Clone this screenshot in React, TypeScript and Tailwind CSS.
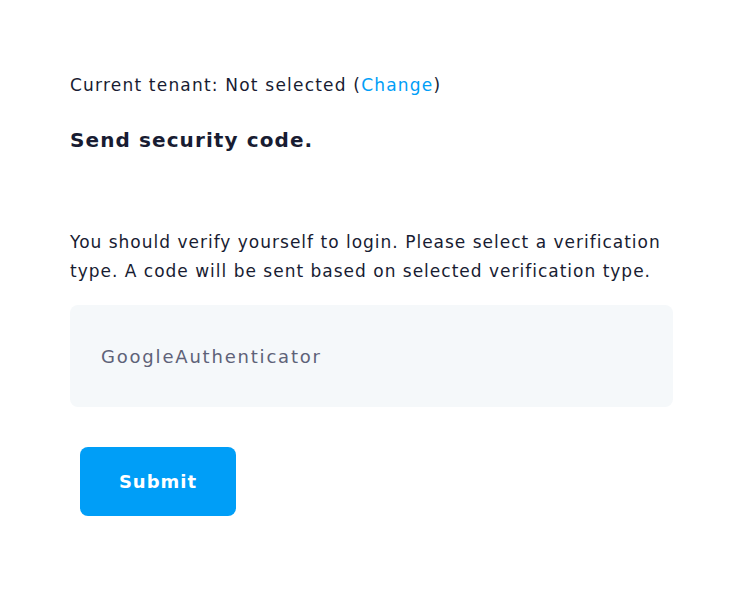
import React from "react";

export default function App() {
  return (
    <div className="min-h-[601px] w-[746px] bg-white" style={{ fontFamily: '"DejaVu Sans", "Noto Sans", sans-serif' }}>
      <div className="pl-[70px] pr-[73px] pt-[73px]">
        <p className="text-[17px] leading-[24px] tracking-[1.2px] text-[#181c32]">
          Current tenant: Not selected (<a className="text-[#009ef7]">Change</a>)
        </p>
        <h1 className="mt-[28px] text-[20px] font-bold leading-[30px] tracking-[1.1px] text-[#181c32]">Send security code.</h1>
        <p className="mt-[73px] text-[17px] leading-[29px] tracking-[1px] text-[#181c32]">
          You should verify yourself to login. Please select a verification type. A code will be sent based on selected verification type.
        </p>
        <div className="mt-[19px] flex h-[102px] items-center rounded-[8px] bg-[#f5f8fa] pl-[31px] text-[18px] tracking-[1.8px] text-[#5e6278]">
          GoogleAuthenticator
        </div>
        <button className="ml-[10px] mt-[40px] flex h-[69px] w-[156px] items-center justify-center rounded-[8px] bg-[#009ef7] text-[18px] font-bold tracking-[1px] text-white">
          Submit
        </button>
      </div>
    </div>
  );
}
